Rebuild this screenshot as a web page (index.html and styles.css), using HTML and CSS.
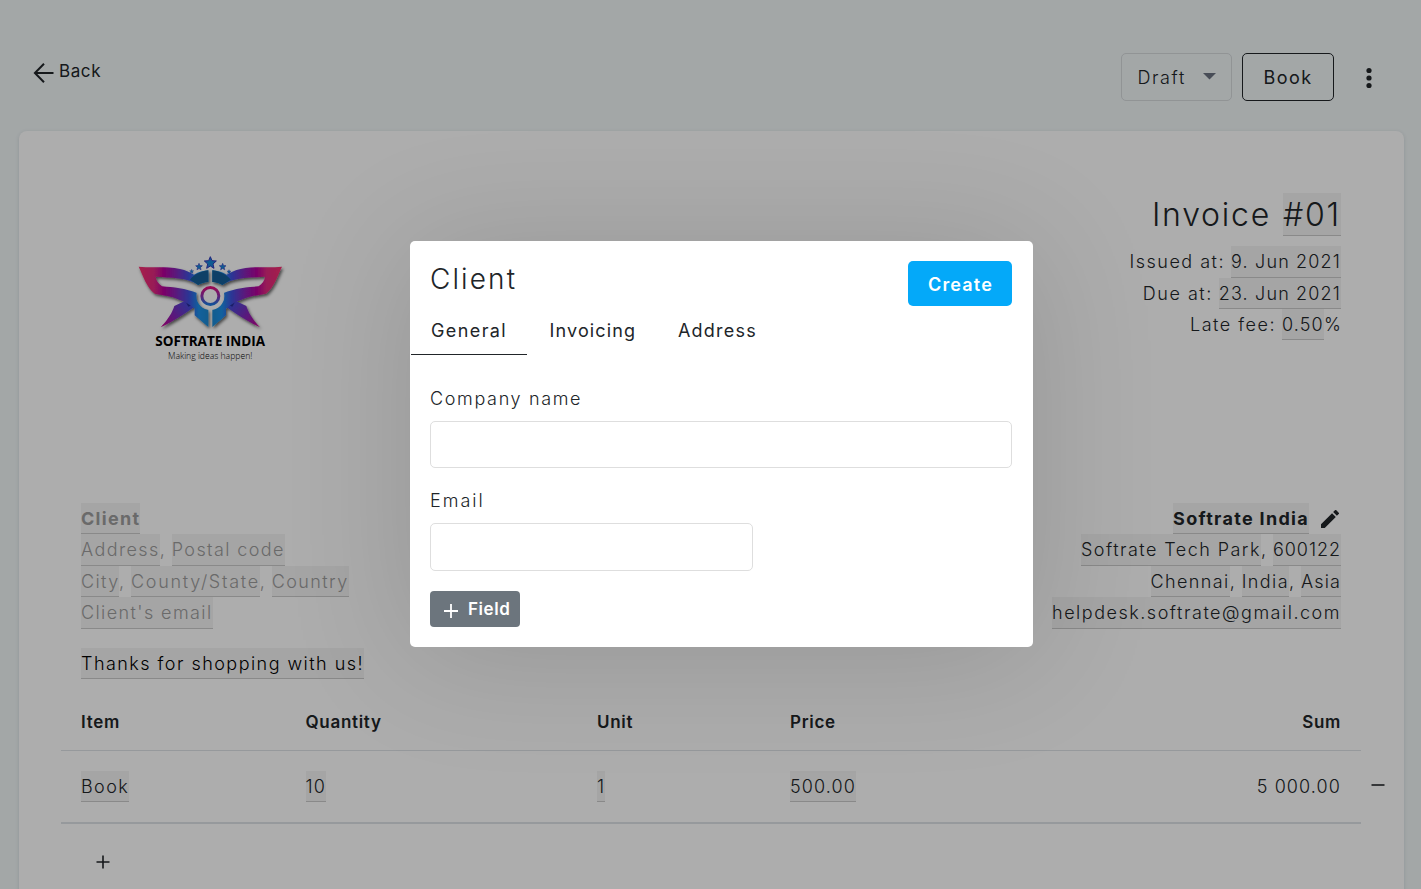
FILE: index.html
```html
<!DOCTYPE html>
<html lang="en">
<head>
<meta charset="utf-8">
<title>Invoice</title>
<link rel="stylesheet" href="styles.css">
</head>
<body>
<div class="page">
  <header class="topbar">
    <a class="back">
      <svg class="back-icon" width="24" height="24" viewBox="0 0 24 24"><path d="M21.5 12H3.2M12 2.7 2.9 12l9.1 9.3" fill="none" stroke="currentColor" stroke-width="2"/></svg>
      <span>Back</span>
    </a>
    <div class="actions">
      <div class="select"><span>Draft</span><svg width="13" height="7" viewBox="0 0 13 7"><path d="M0 0h13L6.500 6.500z" fill="#6b7280"/></svg></div>
      <button class="book">Book</button>
      <svg class="dots" width="8" height="24" viewBox="0 0 8 24"><g fill="currentColor"><circle cx="4" cy="4.500" r="2.600"/><circle cx="4" cy="12" r="2.600"/><circle cx="4" cy="19.500" r="2.600"/></g></svg>
    </div>
  </header>

  <main class="card">
    <section class="head">
      <svg class="logo" width="180" height="130" viewBox="0 0 540 390">
        <defs>
          <linearGradient id="wing" gradientUnits="userSpaceOnUse" x1="56" y1="0" x2="266" y2="0">
            <stop offset="0" stop-color="#f52e6e"/><stop offset=".22" stop-color="#e02a80"/><stop offset=".36" stop-color="#b4009a"/><stop offset=".52" stop-color="#8a22b4"/><stop offset=".72" stop-color="#4050dc"/><stop offset=".86" stop-color="#1a90e8"/><stop offset="1" stop-color="#1a88d0"/>
          </linearGradient>
          <linearGradient id="blade" gradientUnits="userSpaceOnUse" x1="122" y1="260" x2="215" y2="190">
            <stop offset="0" stop-color="#c8008c"/><stop offset=".4" stop-color="#8a22b4"/><stop offset="1" stop-color="#3c50dc"/>
          </linearGradient>
          <linearGradient id="ring" x1="0" y1="0" x2="0" y2="1">
            <stop offset="0" stop-color="#e0107c"/><stop offset=".5" stop-color="#9030b0"/><stop offset="1" stop-color="#1c78e0"/>
          </linearGradient>
          <filter id="soft" x="-10%" y="-10%" width="120%" height="130%"><feDropShadow dx="4" dy="6" stdDeviation="4" flood-opacity=".6"/></filter>
          <mask id="hole"><path d="M0 0h540v390H0z" fill="#fff"/><circle cx="271" cy="168" r="42"/></mask>
          <path id="star" d="M0-18 5-6 18-5 8 4 11 17 0 10-11 17-8 4-18-5-5-6z"/>
          <g id="half" mask="url(#hole)">
            <path d="M122 262C145 238 158 215 163 198L196 182 240 188C205 214 175 235 122 262z" fill="url(#blade)"/>
            <path d="M195 182 214 196 205 200z" fill="#282c98"/>
            <path d="M56 80C95 85 135 78 180 87 198 91 210 97 222 104 236 96 250 92 265 91V126C252 127 243 130 235 135 205 112 150 113 107 110 108 122 115 130 126 139 160 142 196 145 233 160 225 184 240 200 265 206V261L224 226V206C207 190 180 179 155 171 136 165 120 165 104 161 78 140 70 108 56 80z" fill="url(#wing)"/>
            <path d="M210 119C222 104 240 95 265 91V126C252 127 243 130 235 135z" fill="#125f98"/>
          </g>
        </defs>
        <g filter="url(#soft)">
          <use href="#half"/>
          <use href="#half" transform="matrix(-1 0 0 1 542 0)"/>
        </g>
        <circle cx="271" cy="168" r="25.500" fill="none" stroke="url(#ring)" stroke-width="9"/>
        <g fill="#1886d8" stroke="#3436b8" stroke-width="3">
          <use href="#star" x="271" y="68"/>
          <use href="#star" transform="translate(237 80) scale(.56)"/>
          <use href="#star" transform="translate(308 80) scale(.56)"/>
          <use href="#star" transform="translate(215 94) scale(.34)"/>
          <use href="#star" transform="translate(327 95) scale(.34)"/>
        </g>
        <text class="logo-name" x="106" y="319" textLength="329" lengthAdjust="spacingAndGlyphs">SOFTRATE INDIA</text>
        <text class="logo-tag" x="144" y="356" textLength="253" lengthAdjust="spacingAndGlyphs">Making ideas happen!</text>
      </svg>
      <div class="meta">
        <h1><span class="title">Invoice</span><span class="edit no">#01</span></h1>
        <p class="line"><span class="lab">Issued at:</span><span class="edit num date">9. Jun 2021</span></p>
        <p class="line"><span class="lab">Due at:</span><span class="edit num date">23. Jun 2021</span></p>
        <p class="line"><span class="lab">Late fee:</span><span class="edit num fee">0.50</span><span class="pct">%</span></p>
      </div>
    </section>

    <section class="parties">
      <div class="client">
        <p class="line"><b class="edit">Client</b></p>
        <p class="line"><span class="edit">Address</span><i>,</i><span class="edit">Postal code</span></p>
        <p class="line"><span class="edit city">City</span><i>,</i><span class="edit county">County/State</span><i>,</i><span class="edit">Country</span></p>
        <p class="line"><span class="edit">Client's email</span></p>
      </div>
      <div class="company">
        <p class="line"><b class="edit">Softrate India</b><svg class="pencil" width="18" height="18" viewBox="3 3 18 18"><path d="M3 17.250V21h3.750L17.810 9.940l-3.750-3.750zM20.710 7.040a1 1 0 0 0 0-1.410l-2.340-2.340a1 1 0 0 0-1.410 0l-1.830 1.830 3.750 3.750z" fill="currentColor"/></svg></p>
        <p class="line"><span class="edit park">Softrate Tech Park</span><i>,</i><span class="edit zip">600122</span></p>
        <p class="line"><span class="edit">Chennai</span><i>,</i><span class="edit">India</span><i>,</i><span class="edit asia">Asia</span></p>
        <p class="line"><span class="edit mail">helpdesk.softrate@gmail.com</span></p>
      </div>
    </section>

    <p class="note"><span class="edit thanks">Thanks for shopping with us!</span></p>

    <section class="items">
      <div class="row labels"><b>Item</b><b>Quantity</b><b>Unit</b><b>Price</b><b class="sum">Sum</b></div>
      <div class="row entry">
        <span><span class="edit">Book</span></span><span><span class="edit num">10</span></span><span><span class="edit one">1</span></span><span><span class="edit num">500.00</span></span><span class="sum num">5 000.00</span>
        <svg class="minus" width="14" height="14" viewBox="0 0 14 14"><path d="M.5 7h13" stroke="currentColor" stroke-width="1.600"/></svg>
      </div>
      <svg class="plus" width="14" height="14" viewBox="0 0 14 14"><path d="M.5 7h13M7 .5v13" stroke="currentColor" stroke-width="1.600"/></svg>
    </section>
  </main>
</div>

<div class="overlay">
  <div class="modal">
    <div class="modal-head"><h2>Client</h2><button class="create">Create</button></div>
    <nav class="tabs"><a class="tab active">General</a><a class="tab invoicing">Invoicing</a><a class="tab address">Address</a></nav>
    <div class="form">
      <label>Company name</label>
      <div class="input"></div>
      <label class="email">Email</label>
      <div class="input short"></div>
      <button class="field"><svg width="16" height="16" viewBox="0 0 16 16"><path d="M1 8h14M8 1v14" stroke="currentColor" stroke-width="1.800"/></svg><span>Field</span></button>
    </div>
  </div>
</div>
</body>
</html>
```

FILE: styles.css
```css
* { box-sizing: border-box; }
html, body { height: 100%; }
body {
  margin: 0;
  overflow: hidden;
  font: 300 18px/31.4px Inter, sans-serif;
  letter-spacing: 1.4px;
  color: #212529;
  background: #f0f6f7;
}
p, h1, h2 { margin: 0; font-weight: 300; }
i { font-style: normal; }
svg { display: block; flex: none; }
button { font-family: inherit; }

/* Page behind the dialog */
.page { height: 889px; padding: 53px 17px 0 19px; overflow: hidden; }
.topbar { display: flex; justify-content: space-between; height: 78px; }
.back {
  display: flex; align-items: flex-start;
  margin-left: 13px;
  font-size: 17px; font-weight: 400; letter-spacing: .6px;
  line-height: 36px;
}
.back-icon { margin: 8px 3px 0 0; }
.actions { display: flex; align-items: flex-start; }
.select {
  display: flex; align-items: center; justify-content: space-between;
  width: 111px; height: 48px; margin-right: 10px; padding: 1px 15px 0 16px;
  border: 1px solid #d6dadc; border-radius: 5px;
  letter-spacing: 1.6px;
}
.select svg { margin-top: -3px; }
.book {
  width: 92px; height: 48px; padding: 0 0 0 1px;
  border: 1px solid #212529; border-radius: 5px;
  background: none; color: inherit;
  font-size: 18px; font-weight: 400; letter-spacing: 1.5px;
}
.dots { margin: 13px 31.5px 0 31px; }

.card {
  height: 800px; padding: 62px 63px 0 62px;
  border-radius: 8px;
  background: #fff;
  box-shadow: 0 1px 4px rgba(0, 30, 40, .12);
}
.edit {
  display: inline-block;
  height: 31.4px;
  background: rgba(0, 0, 0, .045);
  border-bottom: 1px solid rgba(0, 0, 0, .17);
  white-space: pre;
}
.line { display: flex; height: 31.4px; }
.line i { width: 12px; }
.num { letter-spacing: 1.1px; }
b { font-weight: 700; letter-spacing: 1.3px; }

.head { display: flex; justify-content: space-between; height: 310px; }
.logo { margin: 47px 0 0 39px; }
.logo-name { font: 700 40px "Open Sans", sans-serif; letter-spacing: 0; }
.logo-tag { font: 300 26px "Open Sans", sans-serif; letter-spacing: 0; }
.meta .line, .meta h1 { justify-content: flex-end; }
.meta h1 { display: flex; height: 43px; margin-bottom: 10.3px; font-size: 32px; line-height: 43px; }
.title { margin-right: 12px; letter-spacing: 1.75px; }
.no { height: 43px; letter-spacing: 1.8px; }
.date { letter-spacing: 1.15px; }
.lab { margin-right: 6px; letter-spacing: 1.5px; }
.fee { width: 42px; }
.pct { width: 17px; letter-spacing: 0; }

.parties { display: flex; justify-content: space-between; height: 145px; }
.client { color: #9c9c9c; }
.client .city { width: 38px; }
.county { letter-spacing: 1.7px; }
.company .line { justify-content: flex-end; }
.company .park { letter-spacing: 1.45px; }
.company .zip { letter-spacing: .97px; }
.company .asia { letter-spacing: 1.13px; }
.company .mail { letter-spacing: 1.51px; }
.pencil { margin: 7px 2px 0 12px; }
.thanks { letter-spacing: 1.46px; color: #000; }
.note { height: 45px; }

/* Line items */
.items { margin: 0 -20px; }
.row { display: grid; grid-template-columns: 224.5px 291.5px 193px 1fr 120px; padding: 0 20px; }
.labels { height: 59px; border-bottom: 1px solid #dee2e6; font-size: 17px; line-height: 60px; margin-top: -1px; }
.labels b { font-weight: 600; letter-spacing: .7px; }
.sum { text-align: right; white-space: pre; }
.entry { position: relative; height: 73px; padding-top: 20px; border-bottom: 2px solid #dee2e6; }
.one { letter-spacing: .9px; }
.minus { position: absolute; left: 1309.5px; top: 27px; }
.plus { margin: 31px 0 0 34.5px; }

/* Dialog */
.overlay { position: absolute; inset: 0; background: rgba(0, 0, 0, .32); padding: 241px 0 0 410px; }
.modal {
  width: 623px; height: 406px; padding: 20px;
  border-radius: 5px; background: #fff;
  box-shadow: 0 8px 130px rgba(0, 0, 0, .14);
}
.modal-head { display: flex; justify-content: space-between; height: 45px; }
.modal h2 { font-size: 28px; line-height: 37px; letter-spacing: 2.1px; }
.create {
  width: 104px; height: 45px; margin-right: 1px; padding: 1px 0 0 1px;
  border: 0; border-radius: 5px;
  background: #04a9f9; color: #fff;
  font-size: 18px; font-weight: 600; letter-spacing: 1.15px;
}
.tabs { display: flex; margin: 0 -19px; height: 49px; font-weight: 400; line-height: 49px; }
.tab { width: 116px; padding-left: 20px; }
.active { border-bottom: 1px solid #212529; }
.invoicing { width: 127px; padding-left: 22.5px; letter-spacing: 1.15px; }
.address { padding-left: 24px; letter-spacing: 1.2px; }
.form { display: flex; flex-direction: column; align-items: flex-start; padding-top: 27px; }
label { height: 39px; line-height: 33px; letter-spacing: 1.65px; }
.input { width: 582px; height: 47px; border: 1px solid #dedede; border-radius: 5px; }
.email { margin-top: 16px; letter-spacing: 2px; }
.short { width: 323px; height: 48px; }
.field {
  display: flex; align-items: center;
  width: 90px; height: 36px; margin-top: 20px; padding: 0 0 0 13px;
  border: 0; border-radius: 4px;
  background: #6c757d; color: #fff;
  font-size: 17px; font-weight: 600; letter-spacing: .55px;
}
.field svg { margin: 3px 9px 0 0; }
```
